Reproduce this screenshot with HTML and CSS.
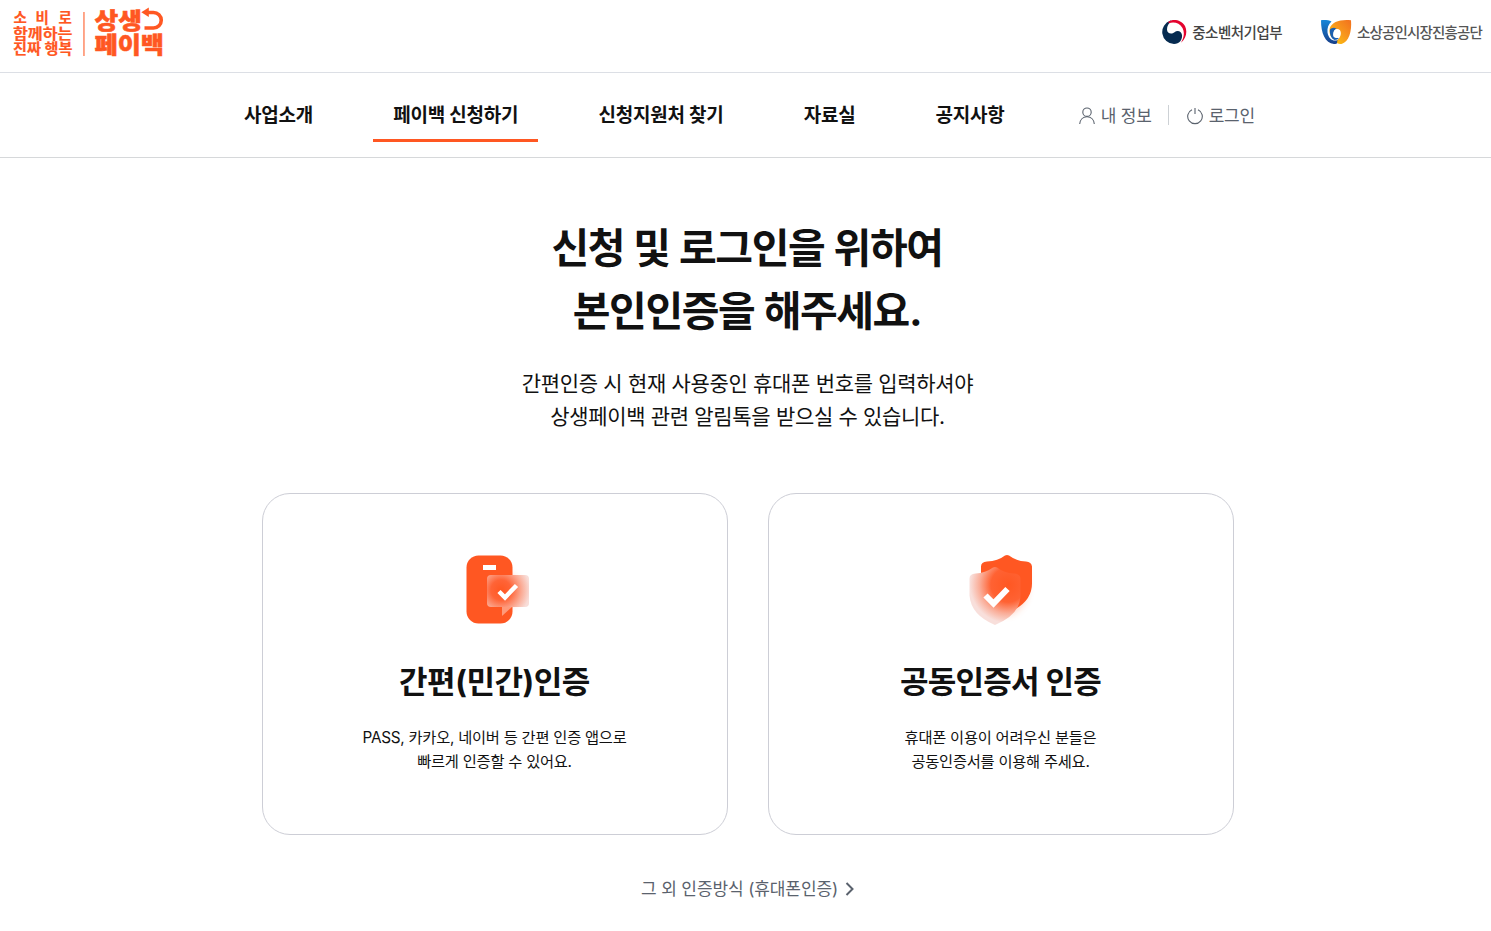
FILE: index.html
```html
<!DOCTYPE html>
<html lang="ko">
<head>
  <meta charset="UTF-8" />
  <meta name="viewport" content="width=device-width, initial-scale=1.0"/>
  <title>상생페이백</title>
  <link rel="stylesheet" href="styles.css">
</head>
<body>

  <header class="top">
    <a class="logo" href="#">
      <svg width="152" height="50" viewBox="0 0 152 50">
        <g class="logo-small">
          <text x="0.5" y="15">소</text>
          <text x="22.5" y="15">비</text>
          <text x="45.500" y="15">로</text>
          <text x="0" y="30.500" textLength="59.500" lengthAdjust="spacingAndGlyphs">함께하는</text>
          <text x="0" y="46" textLength="59.500" lengthAdjust="spacingAndGlyphs">진짜 행복</text>
        </g>
        <rect x="70.200" y="4" width="1.500" height="44" fill="#ff8a65"/>
        <g class="logo-big">
          <text x="81.500" y="20.500" textLength="47.500" lengthAdjust="spacingAndGlyphs">상생</text>
          <text x="81.500" y="45" textLength="69.500" lengthAdjust="spacingAndGlyphs">페이백</text>
        </g>
        <path d="M134 4.500h6.500a7.600 7.600 0 0 1 0 15.500h-9" fill="none" stroke="#ff5722" stroke-width="3.600"/>
        <path d="M128.300 4.200l7.500-4.700v9.400z" fill="#ff5722"/>
      </svg>
    </a>
    <div class="orgs">
      <a class="org" href="#">
        <svg width="26" height="26" viewBox="0 0 26 26">
          <path d="M9.500 1.600A12 12 0 0 0 13 25c6 0 8.500-5 8-9-.7-4.500-5-5-7.500-2.800-3 2.600-7.500 1.300-7.500-2.700C6 7 7.500 4 11 2z" fill="#062b50"/>
          <path d="M7.500 2.700C12-.5 20 .5 24 7c2.500 5 1.500 12-4 16.700 3-5.200 3.800-10.200 1.500-14.700C18.500 3.700 13 2.500 7.500 4.200z" fill="#e4032e"/>
        </svg>
        <span class="org-mss">중소벤처기업부</span>
      </a>
      <a class="org" href="#">
        <svg width="32" height="26" viewBox="0 0 32 26">
          <defs>
            <linearGradient id="blue" x1="0" y1="0" x2="0" y2="1">
              <stop offset="0" stop-color="#1686d9"/>
              <stop offset="1" stop-color="#173f8a"/>
            </linearGradient>
            <linearGradient id="orange" x1="1" y1="0" x2="0" y2="1">
              <stop offset="0" stop-color="#f2701f"/>
              <stop offset=".5" stop-color="#f89a1c"/>
              <stop offset="1" stop-color="#fdcf0b"/>
            </linearGradient>
          </defs>
          <path d="M1 1.200c4-.4 8 0 10.500 1.300C8.500 5 7 9 7.500 13.500 8.500 19 11.500 21.500 15 21.500c1.500 0 3-.5 4-1.500 0 3-1.500 5-5 5C5 24 1 14 1 1.200z" fill="url(#blue)"/>
          <path d="M31 1.200C20 0 12 3 9.800 9c-1 3.500 0 7.500 2.200 9.500 0-5 2-8.500 5.500-8.500 4.500.5 4.500 7 0 11l-.5 3c1.500 1 3 1.200 4.500.9C29 23 32 12 31 1.200z" fill="url(#orange)"/>
          <path d="M10 10.500c-.5 5 1 9 4.500 10.500 2 0 3.500-.8 4.500-2-3 .5-5.500-1-5.500-4.500 0-2.500 1.500-4 3-4.800-2.500-1.700-5-.7-6.500.8z" fill="#1a5fb0"/>
          <ellipse cx="16.500" cy="14.500" rx="3.200" ry="4.400" transform="rotate(15 16.500 14.500)" fill="#fff"/>
        </svg>
        <span class="org-semas">소상공인시장진흥공단</span>
      </a>
    </div>
  </header>

  <nav class="gnb">
    <div class="gnb-inner">
      <ul class="menu">
        <li class="menu-item"><a href="#">사업소개</a></li>
        <li class="menu-item active"><a href="#">페이백 신청하기</a></li>
        <li class="menu-item"><a href="#">신청지원처 찾기</a></li>
        <li class="menu-item"><a href="#">자료실</a></li>
        <li class="menu-item"><a href="#">공지사항</a></li>
      </ul>
      <div class="user">
        <a class="user-link" href="#">
          <svg width="16" height="18" viewBox="0 0 16 18" fill="none" stroke="#5a626d" stroke-width="1.100">
            <circle cx="8" cy="5.200" r="4.200"/>
            <path d="M.7 17c.3-4.300 3.200-7.200 7.300-7.200s7 2.900 7.300 7.200"/>
          </svg>
          내 정보
        </a>
        <a class="user-link" href="#">
          <svg width="16" height="18" viewBox="0 0 16 18" fill="none" stroke="#5a626d" stroke-width="1.100">
            <path d="M5 2.700a7.300 7.300 0 1 0 6 0M8 1v6"/>
          </svg>
          로그인
        </a>
      </div>
    </div>
  </nav>

  <main class="container">
    <h1>신청 및 로그인을 위하여<br>본인인증을 해주세요.</h1>
    <p class="desc">간편인증 시 현재 사용중인 휴대폰 번호를 입력하셔야<br>상생페이백 관련 알림톡을 받으실 수 있습니다.</p>

    <div class="cards">
      <a class="card" href="#">
        <svg class="card-icon" width="80" height="80" viewBox="0 0 80 80">
          <defs>
            <radialGradient id="glassPhone" gradientUnits="userSpaceOnUse" cx="46" cy="45" r="29">
              <stop offset="0" stop-color="#ff5722"/>
              <stop offset=".35" stop-color="#ff6437"/>
              <stop offset=".7" stop-color="#fba992"/>
              <stop offset="1" stop-color="#f8ddd8"/>
            </radialGradient>
            <filter id="soft" x="-50%" y="-50%" width="200%" height="200%"><feGaussianBlur stdDeviation="4"/></filter>
          </defs>
          <rect x="36" y="30" width="25" height="31" rx="8" fill="#ff5722" opacity=".4" filter="url(#soft)"/>
          <rect x="11.500" y="10.500" width="46" height="68" rx="12" fill="#ff5722"/>
          <rect x="28" y="20" width="13" height="5" fill="#fff"/>
          <path d="M36 30h34a4 4 0 0 1 4 4v24a4 4 0 0 1-4 4H36a4 4 0 0 1-4-4V34a4 4 0 0 1 4-4z" fill="url(#glassPhone)"/>
          <path d="M47 62h10l-10 9z" fill="#ff9a7a"/>
          <path d="M44 46.500l6 6L61.500 40.500" fill="none" stroke="#fff" stroke-width="4.500"/>
        </svg>
        <h2>간편(민간)인증</h2>
        <p>PASS, 카카오, 네이버 등 간편 인증 앱으로<br>빠르게 인증할 수 있어요.</p>
      </a>
      <a class="card" href="#">
        <svg class="card-icon" width="80" height="80" viewBox="0 0 80 80">
          <defs>
            <radialGradient id="glassShield" gradientUnits="userSpaceOnUse" cx="47" cy="40" r="38">
              <stop offset="0" stop-color="#ff5722"/>
              <stop offset=".45" stop-color="#ff6233"/>
              <stop offset=".75" stop-color="#faad98"/>
              <stop offset="1" stop-color="#f8dfdb"/>
            </radialGradient>
          </defs>
          <path d="M28 27h37v22q-5 15-18 20-19-8-19-25z" fill="#ff5722" opacity=".4" filter="url(#soft)"/>
          <path d="M44 10.500q2-1 4 0 7 5.500 17 6 5.500.5 6 5v17q0 20-26 30-22-10-25-27V21.500q0-4.500 6-5 11-.5 18-6z" fill="#ff5722"/>
          <path d="M32 22.500q2-1 4 0 7 5.500 17 6 6 .5 6.500 5v17Q59 70 34 80 10 70 8.500 50.500v-17q0-4.500 6-5 10-.5 17.500-6z" fill="url(#glassShield)"/>
          <path d="M24.500 50.500l8 8L46.500 44" fill="none" stroke="#fff" stroke-width="6"/>
        </svg>
        <h2 class="wide">공동인증서 인증</h2>
        <p>휴대폰 이용이 어려우신 분들은<br>공동인증서를 이용해 주세요.</p>
      </a>
    </div>

    <a class="other" href="#">
      그 외 인증방식 (휴대폰인증)
      <svg width="10" height="14" viewBox="0 0 10 14" fill="none" stroke="#5a626d" stroke-width="2"><path d="M1.500 1l6 6-6 6"/></svg>
    </a>
  </main>

</body>
</html>
```
FILE: styles.css
```css
* {
  box-sizing: border-box;
  margin: 0;
  padding: 0;
}
body {
  font-family: Inter, "Noto Sans CJK KR", sans-serif;
  background: #fff;
  color: #111;
}
a {
  color: inherit;
  text-decoration: none;
}
.top {
  display: flex;
  justify-content: space-between;
  height: 73px;
  padding: 8px 9px 0 13px;
  border-bottom: 1px solid #dcdfe5;
}
.logo svg {
  overflow: visible;
}
.logo-small {
  font-size: 14.5px;
  font-weight: 700;
  fill: #ff5722;
  stroke: #ff5722;
  stroke-width: 0.2px;
}
.logo-big {
  font-size: 23px;
  font-weight: 900;
  fill: #ff5722;
  stroke: #ff5722;
  stroke-width: 0.5px;
}
.orgs {
  display: flex;
  gap: 38px;
  height: 48px;
}
.org {
  display: flex;
  align-items: center;
  gap: 5px;
  color: #444;
  font-size: 14.5px;
  font-weight: 500;
}
.org span {
  padding-bottom: 2px;
}
.org-mss {
  letter-spacing: -0.5px;
}
.org-semas {
  color: #555;
  letter-spacing: -0.85px;
}
.gnb {
  height: 85px;
  border-bottom: 1px solid #d6d8da;
}
.gnb-inner {
  display: flex;
  justify-content: space-between;
  width: 1043px;
  margin: 0 auto;
  padding-right: 12px;
}
.menu {
  display: flex;
  gap: 40px;
  list-style: none;
}
.menu-item {
  height: 69px;
  padding: 0 20px;
  line-height: 86px;
  font-size: 19px;
  font-weight: 700;
  letter-spacing: -0.2px;
}
.menu-item.active {
  border-bottom: 3px solid #ff5722;
}
.user {
  display: flex;
  align-items: center;
  height: 84px;
}
.user-link {
  display: flex;
  align-items: center;
  gap: 6px;
  height: 20px;
  padding-top: 1px;
  color: #5a626d;
  font-size: 17px;
  line-height: 18px;
  letter-spacing: -0.2px;
}
.user-link + .user-link {
  margin-left: 16px;
  padding-left: 18px;
  border-left: 1px solid #cdd1d5;
}
.container {
  display: flex;
  flex-direction: column;
  align-items: center;
  padding: 59px 0 0 5px;
  text-align: center;
}
h1 {
  margin-left: -2px;
  font-size: 41px;
  font-weight: 700;
  line-height: 63px;
  letter-spacing: -1.4px;
  word-spacing: 1px;
}
.desc {
  margin: 24px 0 0 -1px;
  font-size: 21px;
  line-height: 33px;
  letter-spacing: -0.32px;
}
.cards {
  display: flex;
  gap: 40px;
  margin-top: 60px;
}
.card {
  width: 466px;
  height: 342px;
  padding-top: 51px;
  border: 1px solid #cdced6;
  border-radius: 28px;
}
.card-icon {
  display: block;
  margin: 0 auto;
}
.card h2 {
  margin: 33px 1px 0 0;
  font-size: 31px;
  line-height: 48px;
  letter-spacing: -0.45px;
}
.card h2.wide {
  letter-spacing: -0.75px;
}
.card p {
  margin: 20px 1px 0 0;
  font-size: 15.3px;
  line-height: 24px;
  letter-spacing: -0.25px;
}
.other {
  display: flex;
  align-items: center;
  gap: 7px;
  margin-top: 40px;
  color: #5a626d;
  font-size: 17px;
  line-height: 28px;
  letter-spacing: -0.1px;
}
```
